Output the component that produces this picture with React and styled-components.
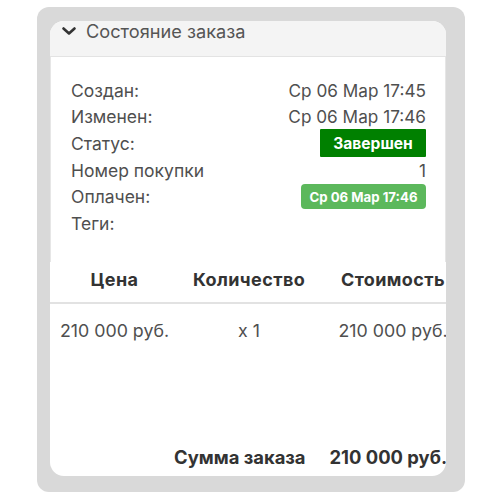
import React from 'react';
import styled, { createGlobalStyle } from 'styled-components';

const GlobalStyle = createGlobalStyle`
    body {
        margin: 0;
        background: #ffffff;
        font-family: Inter, "Noto Sans", sans-serif;
    }
`

const info = [
    { label: 'Создан:', value: 'Ср 06 Мар 17:45' },
    { label: 'Изменен:', value: 'Ср 06 Мар 17:46' },
    { label: 'Статус:', badge: 'done', value: 'Завершен' },
    { label: 'Номер покупки', value: '1' },
    { label: 'Оплачен:', badge: 'paid', value: 'Ср 06 Мар 17:46' },
    { label: 'Теги:', value: '' },
]

const Chevron = () => (
    <svg width="14" height="8" viewBox="0 0 14 8">
        <path d="M1.5 1.5 L7 6.5 L12.5 1.5" fill="none" stroke="#333" strokeWidth="2.6" strokeLinecap="round" strokeLinejoin="round" />
    </svg>
)

const App = () => {
    return (<Frame>
        <GlobalStyle />
        <Card>
            <Header>
                <Chevron />
                <HeaderTitle>Состояние заказа</HeaderTitle>
            </Header>
            <InfoSection>
                {
                    info.map(row => {
                        return <InfoRow key={row.label}>
                            <Label>{row.label}</Label>
                            {row.badge === 'done' && <StatusBadge>{row.value}</StatusBadge>}
                            {row.badge === 'paid' && <PaidBadge>{row.value}</PaidBadge>}
                            {!row.badge && <Value>{row.value}</Value>}
                        </InfoRow>
                    })
                }
            </InfoSection>
            <Table>
                <HeadRow>
                    <HeadCell>Цена</HeadCell>
                    <HeadCell>Количество</HeadCell>
                    <HeadCell>Стоимость</HeadCell>
                </HeadRow>
                <DataRow>
                    <Cell>210 000 руб.</Cell>
                    <Cell>x 1</Cell>
                    <Cell>210 000 руб.</Cell>
                </DataRow>
                <Spacer />
                <TotalRow>
                    <span>Сумма заказа</span>
                    <span>210 000 руб.</span>
                </TotalRow>
            </Table>
        </Card>
    </Frame>);
}

export default App;

const Frame = styled.div`
    width: 428px;
    height: 485px;
    box-sizing: border-box;
    margin: 7px 0 0 37px;
    padding: 14px 19px 16px 13px;
    background: #d9d9d9;
    border-radius: 12px;
`

const Card = styled.div`
    height: 100%;
    background: #fff;
    border-radius: 14px;
    overflow: hidden;
    display: flex;
    flex-direction: column;
`

const Header = styled.div`
    height: 36px;
    flex-shrink: 0;
    box-sizing: border-box;
    display: flex;
    align-items: flex-start;
    gap: 10px;
    padding: 0 12px;
    background: #f4f4f4;
    border-bottom: 1px solid #e3e3e3;
    svg {
        margin-top: 6px;
    }
`

const HeaderTitle = styled.div`
    font-size: 18.2px;
    line-height: 20px;
    color: #555;
`

const InfoSection = styled.div`
    height: 205px;
    flex-shrink: 0;
    box-sizing: border-box;
    padding: 20px 19px 0 20px;
    border-left: 1px solid #e6e6e6;
    border-right: 1px solid #e6e6e6;
`

const InfoRow = styled.div`
    height: 26.6px;
    display: flex;
    justify-content: space-between;
    align-items: center;
`

const Label = styled.span`
    font-size: 17.5px;
    color: #4f4f4f;
`

const Value = styled.span`
    font-size: 17.2px;
    color: #4f4f4f;
`

const StatusBadge = styled.span`
    flex-shrink: 0;
    width: 106px;
    height: 28px;
    display: flex;
    align-items: center;
    justify-content: center;
    background: #008000;
    color: #fff;
    font-weight: 700;
    font-size: 15.6px;
    border-radius: 1px;
`

const PaidBadge = styled.span`
    flex-shrink: 0;
    width: 125px;
    height: 25px;
    display: flex;
    align-items: center;
    justify-content: center;
    background: #5cb85c;
    color: #fff;
    font-weight: 700;
    font-size: 13.2px;
    border-radius: 4px;
`

const Table = styled.div`
    flex: 1;
    display: flex;
    flex-direction: column;
    width: 417px;
`

const HeadRow = styled.div`
    display: grid;
    grid-template-columns: 129px 140px 148px;
    height: 42px;
    box-sizing: border-box;
    padding-bottom: 6px;
    align-items: center;
    border-bottom: 2px solid #e2e2e2;
`

const HeadCell = styled.div`
    text-align: center;
    font-weight: 700;
    font-size: 18px;
    letter-spacing: 0.4px;
    color: #333;
    white-space: nowrap;
`

const DataRow = styled.div`
    display: grid;
    grid-template-columns: 129px 140px 148px;
    height: 52px;
    align-items: center;
`

const Cell = styled.div`
    text-align: center;
    font-size: 17.8px;
    color: #4f4f4f;
    white-space: nowrap;
`

const Spacer = styled.div`
    flex: 1;
`

const TotalRow = styled.div`
    height: 38px;
    display: flex;
    align-items: center;
    gap: 24px;
    padding-left: 124px;
    font-weight: 700;
    font-size: 18.4px;
    color: #333;
    white-space: nowrap;
`
